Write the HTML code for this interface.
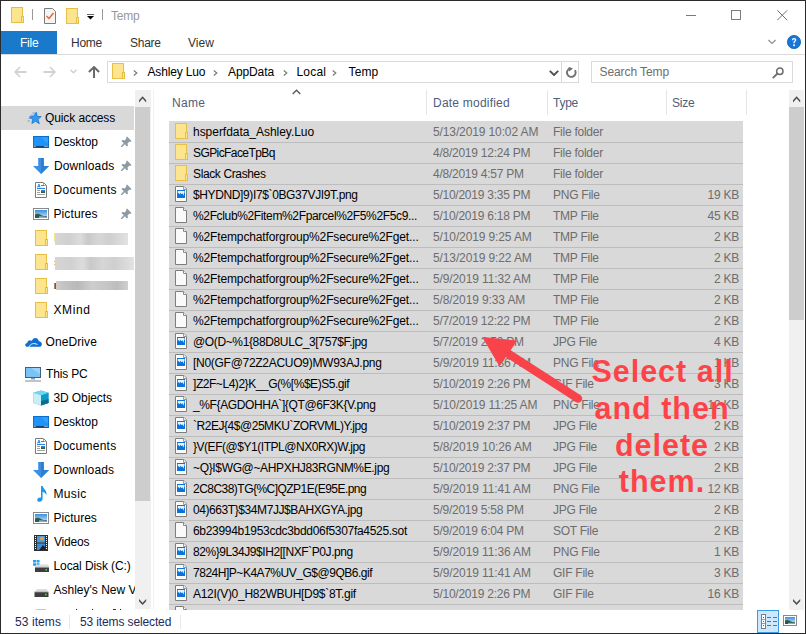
<!DOCTYPE html>
<html><head><meta charset="utf-8">
<style>
*{margin:0;padding:0;box-sizing:border-box}
html,body{width:806px;height:634px;overflow:hidden;background:#fff}
body{position:relative;font-family:"Liberation Sans",sans-serif;font-size:12px;color:#000;letter-spacing:-0.25px}
.abs{position:absolute}
.t{position:absolute;white-space:nowrap;line-height:24px;height:24px}
#frame{position:absolute;left:0;top:0;width:806px;height:634px;border:1px solid #2b2b2b;z-index:50;pointer-events:none}
.row{position:absolute;left:169px;width:574px;height:21px;background:#d9d9d9;border-bottom:1px solid #bdbdbd}
.ric{position:absolute;left:6px;top:1px;width:13px;height:16px;line-height:0}
.rn,.rd,.rt,.rs{position:absolute;top:-2px;line-height:24px;white-space:nowrap}
.rn{left:24px;color:#000}
.rd{left:264px;color:#6d6d6d}
.rt{left:384px;color:#6d6d6d}
.rs{right:4px;color:#6d6d6d}
.ni{position:absolute;line-height:0}
.nt{position:absolute;line-height:24px;white-space:nowrap;color:#000}
.blur{position:absolute;background:linear-gradient(90deg,#d6d6d6,#d0d0d0 20%,#dcdcdc 35%,#c9c9c9 45%,#d6d6d6 60%,#cfcfcf 75%,#dadada 90%,#e2e2e2)}
.blur3{background:linear-gradient(90deg,#cfcfcf,#c4c4c4 10%,#b9b9b9 30%,#cdcdcd 50%,#c6c6c6 70%,#bdbdbd 85%,#d0d0d0)}
</style></head><body>
<div id="frame"></div>

<!-- title bar -->
<div class="abs" style="left:11px;top:7px;line-height:0"><svg width="13" height="16" viewBox="0 0 13 16"><rect x="0.5" y="0.5" width="11" height="15" fill="#fde590" stroke="#e8bf45"/><rect x="10.5" y="9.5" width="2" height="6" fill="#fde590" stroke="#e8bf45"/></svg></div>
<div class="abs" style="left:32px;top:9px;width:1px;height:11px;background:#9a9a9a"></div>
<div class="abs" style="left:44px;top:8px;line-height:0"><svg width="12" height="16" viewBox="0 0 12 16"><path d="M0.5 0.5H8.5L11.5 3.5V15.5H0.5Z" fill="#f4f4f4" stroke="#7b7b7b"/><path d="M2.5 8L5 10.5L9.5 5" fill="none" stroke="#e8632a" stroke-width="1.4"/></svg></div>
<div class="abs" style="left:66px;top:8px;line-height:0"><svg width="13" height="16" viewBox="0 0 13 16"><rect x="0.5" y="0.5" width="11" height="15" fill="#fde590" stroke="#e8bf45"/><rect x="10.5" y="9.5" width="2" height="6" fill="#fde590" stroke="#e8bf45"/></svg></div>
<div class="abs" style="left:87px;top:14px;line-height:0"><svg width="7" height="6" viewBox="0 0 7 6"><path d="M0 0H7" stroke="#000" stroke-width="1.2"/><path d="M0 2H7L3.5 5.5Z" fill="#000"/></svg></div>
<div class="abs" style="left:102px;top:9px;width:1px;height:11px;background:#9a9a9a"></div>
<div class="t" style="left:111px;top:4px;color:#999">Temp</div>

<!-- window controls -->
<div class="abs" style="left:686px;top:15px;width:10px;height:1px;background:#7a7a7a"></div>
<div class="abs" style="left:731px;top:10px;width:10px;height:10px;border:1px solid #7d7d7d"></div>
<div class="abs" style="left:777px;top:10px;line-height:0"><svg width="11" height="11" viewBox="0 0 11 11"><path d="M0.3 0.3L10.2 10.2M10.2 0.3L0.3 10.2" stroke="#6e6e6e" stroke-width="1"/></svg></div>

<!-- ribbon tabs -->
<div class="abs" style="left:1px;top:31px;width:56px;height:23px;background:#1979ca"></div>
<div class="t" style="left:20px;top:31px;color:#fff">File</div>
<div class="t" style="left:71px;top:31px;color:#333">Home</div>
<div class="t" style="left:130px;top:31px;color:#333">Share</div>
<div class="t" style="left:188px;top:31px;color:#333;letter-spacing:0px">View</div>
<div class="abs" style="left:768px;top:39px;line-height:0"><svg width="8" height="6" viewBox="0 0 8 6"><path d="M0.4 1L4 4.4L7.6 1" fill="none" stroke="#8f8f8f" stroke-width="1.3"/></svg></div>
<div class="abs" style="left:787px;top:35px;line-height:0"><svg width="14" height="14" viewBox="0 0 14 14"><circle cx="7" cy="7" r="6.6" fill="#1677d8" stroke="#0b5fb8" stroke-width="0.8"/><path d="M4.9 5.2C4.9 3.8 5.8 3.1 7.1 3.1C8.4 3.1 9.3 3.9 9.3 5C9.3 6.4 7.9 6.6 7.7 7.6V8.3H6.4V7.4C6.6 6.1 8 5.9 8 5.1C8 4.6 7.6 4.3 7.1 4.3C6.5 4.3 6.2 4.7 6.2 5.2Z" fill="#fff"/><rect x="6.2" y="9.4" width="1.7" height="1.7" fill="#fff"/></svg></div>
<div class="abs" style="left:1px;top:54px;width:804px;height:1px;background:#dadbdc"></div>

<!-- nav buttons -->
<div class="abs" style="left:14px;top:66px;line-height:0"><svg width="13" height="12" viewBox="0 0 13 12"><path d="M6 1L1.2 6L6 11M1.2 6H12.5" fill="none" stroke="#d2d2d2" stroke-width="1.8"/></svg></div>
<div class="abs" style="left:43px;top:66px;line-height:0"><svg width="13" height="12" viewBox="0 0 13 12"><path d="M7 1L11.8 6L7 11M11.8 6H0.5" fill="none" stroke="#d2d2d2" stroke-width="1.8"/></svg></div>
<div class="abs" style="left:70px;top:69px;line-height:0"><svg width="7" height="5" viewBox="0 0 7 5"><path d="M0.5 0.8L3.5 3.8L6.5 0.8" fill="none" stroke="#d0d0d0" stroke-width="1.4"/></svg></div>
<div class="abs" style="left:88px;top:66px;line-height:0"><svg width="12" height="12" viewBox="0 0 12 12"><path d="M0.9 6L6 1L11.1 6M6 1.2V12" fill="none" stroke="#6a6a6a" stroke-width="2"/></svg></div>

<!-- address bar -->
<div class="abs" style="left:107px;top:61px;width:472px;height:22px;border:1px solid #d9d9d9"></div>
<div class="abs" style="left:561px;top:62px;width:1px;height:20px;background:#d9d9d9"></div>
<div class="abs" style="left:112px;top:63px;line-height:0"><svg width="13" height="16" viewBox="0 0 13 16"><rect x="0.5" y="0.5" width="11" height="15" fill="#fde590" stroke="#e8bf45"/><rect x="10.5" y="9.5" width="2" height="6" fill="#fde590" stroke="#e8bf45"/></svg></div>
<div class="abs" style="left:133px;top:70px;line-height:0"><svg width="5" height="6" viewBox="0 0 5 6"><path d="M0.8 0.5L3.8 3L0.8 5.5" fill="none" stroke="#7a7a7a" stroke-width="1.2"/></svg></div>
<div class="t" style="left:147.5px;top:60px;color:#000;letter-spacing:-0.16px">Ashley Luo</div>
<div class="abs" style="left:213px;top:70px;line-height:0"><svg width="5" height="6" viewBox="0 0 5 6"><path d="M0.8 0.5L3.8 3L0.8 5.5" fill="none" stroke="#7a7a7a" stroke-width="1.2"/></svg></div>
<div class="t" style="left:228px;top:60px;color:#000;letter-spacing:-0.1px">AppData</div>
<div class="abs" style="left:283px;top:70px;line-height:0"><svg width="5" height="6" viewBox="0 0 5 6"><path d="M0.8 0.5L3.8 3L0.8 5.5" fill="none" stroke="#7a7a7a" stroke-width="1.2"/></svg></div>
<div class="t" style="left:296.5px;top:60px;color:#000;letter-spacing:0.2px">Local</div>
<div class="abs" stle="" style="left:332px;top:70px;line-height:0"><svg width="5" height="6" viewBox="0 0 5 6"><path d="M0.8 0.5L3.8 3L0.8 5.5" fill="none" stroke="#7a7a7a" stroke-width="1.2"/></svg></div>
<div class="t" style="left:348.5px;top:60px;color:#000;letter-spacing:0.15px">Temp</div>
<div class="abs" style="left:549px;top:70px;line-height:0"><svg width="10" height="6" viewBox="0 0 10 6"><path d="M0.8 0.8L5 5L9.2 0.8" fill="none" stroke="#505050" stroke-width="1.9"/></svg></div>
<div class="abs" style="left:566px;top:67px;line-height:0"><svg width="11" height="11" viewBox="0 0 11 11"><path d="M8.9 3.2A4.3 4.3 0 1 1 4.2 1.4" fill="none" stroke="#707070" stroke-width="1.9"/><path d="M2.6 -0.2L7 1.4L3.2 4.4Z" fill="#707070"/></svg></div>

<!-- search -->
<div class="abs" style="left:591px;top:61px;width:202px;height:22px;border:1px solid #d9d9d9"></div>
<div class="t" style="left:599.5px;top:60px;color:#6d6d6d;letter-spacing:-0.09px">Search Temp</div>
<div class="abs" style="left:772px;top:67px;line-height:0"><svg width="12" height="12" viewBox="0 0 12 12"><circle cx="7.8" cy="4.2" r="3.2" fill="none" stroke="#6d6d6d" stroke-width="1.5"/><path d="M5.5 6.5L0.8 11.2" stroke="#6d6d6d" stroke-width="1.8"/></svg></div>

<!-- nav pane -->
<div class="abs" style="left:1px;top:106px;width:133px;height:24px;background:#d9d9d9"></div>
<div class="abs" style="left:1px;top:90px;width:134px;height:520px;overflow:hidden" id="navclip">
<div class="abs" style="left:-1px;top:-90px;width:806px;height:634px">
<div class="ni" style="left:27px;top:112px"><svg width="15" height="13" viewBox="0 0 15 13"><path d="M9.3 0.3L10.2 4.4L14.2 4.6L11 7.3L12.3 11.6L8.4 9.3L4.9 11.6L5.6 7.4L2.4 5L6.6 4.3Z" fill="#2f9af3" stroke="#1d6fc9" stroke-width="0.8" stroke-linejoin="round"/><path d="M5.5 1H8M3.5 3.2H6.5M1.5 6.5H3.5M0.5 9H3" stroke="#5aa6ec" stroke-width="0.9"/></svg></div>
<div class="nt" style="left:45px;top:106px;letter-spacing:-0.1px">Quick access</div>
<div class="ni" style="left:33px;top:136px"><svg width="16" height="12" viewBox="0 0 16 12"><rect x="0.5" y="0.5" width="15" height="11" fill="#1e94fa" stroke="#0d6fcc"/><path d="M9 1.5L14.5 1.5V7Z" fill="#4ab0ff" opacity="0.6"/><rect x="1" y="10" width="14" height="1.5" fill="#0b3f75"/><rect x="1.5" y="10" width="1" height="1" fill="#fff"/><rect x="11.5" y="10" width="1" height="1" fill="#fff"/><rect x="13.5" y="10" width="1" height="1" fill="#fff"/></svg></div>
<div class="nt" style="left:54px;top:130px;letter-spacing:0px">Desktop</div>
<div class="ni" style="left:121px;top:136px"><svg width="11" height="11" viewBox="0 0 11 11"><path d="M6 0.5L10.5 5L9.5 6L8.5 5.5L6.5 7.5L7 9.5L6 10.5L0.5 5L1.5 4L3.5 4.5L5.5 2.5L5 1.5Z" fill="#8b9aa4"/><path d="M3.5 7.5L0 11" stroke="#8b9aa4" stroke-width="1.5"/></svg></div>
<div class="ni" style="left:33px;top:158px"><svg width="16" height="16" viewBox="0 0 16 16"><path d="M5.2 0H10.8V8H16L8 16L0 8H5.2Z" fill="#3a8fe3"/><path d="M8 0H10.8V8H16L8 16Z" fill="#2b7fd6"/></svg></div>
<div class="nt" style="left:54px;top:154px;letter-spacing:0.1px">Downloads</div>
<div class="ni" style="left:121px;top:160px"><svg width="11" height="11" viewBox="0 0 11 11"><path d="M6 0.5L10.5 5L9.5 6L8.5 5.5L6.5 7.5L7 9.5L6 10.5L0.5 5L1.5 4L3.5 4.5L5.5 2.5L5 1.5Z" fill="#8b9aa4"/><path d="M3.5 7.5L0 11" stroke="#8b9aa4" stroke-width="1.5"/></svg></div>
<div class="ni" style="left:35px;top:182px"><svg width="12" height="16" viewBox="0 0 12 16"><path d="M0.5 0.5H8.5L11.5 3.5V15.5H0.5Z" fill="#fff" stroke="#7b7b7b"/><path d="M8.5 0.5V3.5H11.5" fill="none" stroke="#aaa"/><path d="M2.5 5.5L4 2L5 5.5M3 4.5H5" fill="none" stroke="#2b86e0" stroke-width="0.9"/><path d="M6 3.5H9M2 6.5H10" stroke="#2b86e0" stroke-width="1"/><path d="M2 8.5H5M2 10.5H5M2 12.5H10" stroke="#8a8a8a" stroke-width="0.8"/><rect x="6" y="8" width="4" height="3" fill="#3a7fbf"/><rect x="6" y="9.5" width="4" height="1.5" fill="#2e5e3a"/></svg></div>
<div class="nt" style="left:53.5px;top:178px;letter-spacing:0.3px">Documents</div>
<div class="ni" style="left:121px;top:184px"><svg width="11" height="11" viewBox="0 0 11 11"><path d="M6 0.5L10.5 5L9.5 6L8.5 5.5L6.5 7.5L7 9.5L6 10.5L0.5 5L1.5 4L3.5 4.5L5.5 2.5L5 1.5Z" fill="#8b9aa4"/><path d="M3.5 7.5L0 11" stroke="#8b9aa4" stroke-width="1.5"/></svg></div>
<div class="ni" style="left:33px;top:208px"><svg width="16" height="12" viewBox="0 0 16 12"><rect x="0.5" y="0.5" width="15" height="11" fill="#fff" stroke="#8a8a8a"/><defs><linearGradient id="sky" x1="0" y1="0" x2="0" y2="1"><stop offset="0" stop-color="#3b8fe0"/><stop offset="1" stop-color="#cfe6f5"/></linearGradient></defs><rect x="2" y="2" width="12" height="8" fill="url(#sky)"/><path d="M2 6.5C4 5 6 5.5 9 7.5C11 8.5 12.5 8 14 8.5V10H2Z" fill="#2d5d4a"/><path d="M6 8.5C8 8 11 9 14 9.2V10H6Z" fill="#7fb0c8"/></svg></div>
<div class="nt" style="left:53.5px;top:202px;letter-spacing:0.1px">Pictures</div>
<div class="ni" style="left:121px;top:208px"><svg width="11" height="11" viewBox="0 0 11 11"><path d="M6 0.5L10.5 5L9.5 6L8.5 5.5L6.5 7.5L7 9.5L6 10.5L0.5 5L1.5 4L3.5 4.5L5.5 2.5L5 1.5Z" fill="#8b9aa4"/><path d="M3.5 7.5L0 11" stroke="#8b9aa4" stroke-width="1.5"/></svg></div>
<div class="ni" style="left:35px;top:230px"><svg width="13" height="16" viewBox="0 0 13 16"><rect x="0.5" y="0.5" width="11" height="15" fill="#fde590" stroke="#e8bf45"/><rect x="10.5" y="9.5" width="2" height="6" fill="#fde590" stroke="#e8bf45"/></svg></div>
<div class="blur blur1" style="left:55px;top:233px;width:73px;height:12px"></div>
<div class="ni" style="left:35px;top:254px"><svg width="13" height="16" viewBox="0 0 13 16"><rect x="0.5" y="0.5" width="11" height="15" fill="#fde590" stroke="#e8bf45"/><rect x="10.5" y="9.5" width="2" height="6" fill="#fde590" stroke="#e8bf45"/></svg></div>
<div class="blur blur2" style="left:55px;top:257px;width:79px;height:13px"></div>
<div class="ni" style="left:35px;top:278px"><svg width="13" height="16" viewBox="0 0 13 16"><rect x="0.5" y="0.5" width="11" height="15" fill="#fde590" stroke="#e8bf45"/><rect x="10.5" y="9.5" width="2" height="6" fill="#fde590" stroke="#e8bf45"/></svg></div>
<div class="blur blur3" style="left:56px;top:281px;width:72px;height:9px"></div>
<div class="ni" style="left:35px;top:302px"><svg width="13" height="16" viewBox="0 0 13 16"><rect x="0.5" y="0.5" width="11" height="15" fill="#fde590" stroke="#e8bf45"/><rect x="10.5" y="9.5" width="2" height="6" fill="#fde590" stroke="#e8bf45"/></svg></div>
<div class="nt" style="left:53.5px;top:298px;letter-spacing:0.6px">XMind</div>
<div class="ni" style="left:25px;top:337px"><svg width="17" height="10" viewBox="0 0 17 10"><path d="M1.5 9.8C-0.3 9.5 -0.3 6.2 2.2 6C2.5 3.2 5.5 2.8 6.8 4C8 0.2 13 0 13.8 4.3C16.5 4.3 17.5 7 16.5 8.5L15.5 9.8Z" fill="#0f6fd2"/><path d="M4.2 9.8C5.5 6.5 9 5.8 12.5 7.5" stroke="#fff" stroke-width="1" fill="none"/></svg></div>
<div class="nt" style="left:45.5px;top:330px;letter-spacing:0.1px">OneDrive</div>
<div class="ni" style="left:25px;top:367px"><svg width="16" height="15" viewBox="0 0 16 15"><rect x="0.5" y="0.5" width="15" height="10" fill="#79c3f6" stroke="#44607c"/><path d="M6 1L15 1V7Z" fill="#a9dafc" opacity="0.7"/><path d="M6 11H10V12.5H6Z" fill="#8a9aa8"/><path d="M0 14H16" stroke="#9aa6ae" stroke-width="1.3"/></svg></div>
<div class="nt" style="left:46px;top:362px;letter-spacing:-0.15px">This PC</div>
<div class="ni" style="left:33px;top:390px"><svg width="16" height="16" viewBox="0 0 16 16"><path d="M8 0.5L15.5 2.8V13L8 15.5L0.5 13V2.8Z" fill="#23b2d8"/><path d="M8 5.2L15.5 2.8V13L8 15.5Z" fill="#0c9bc4"/><path d="M0.5 2.8L8 0.5L15.5 2.8L8 5.2Z" fill="#6fd6f0"/><path d="M0.5 2.8L8 5.2V15.5L0.5 13Z" fill="#c8eef8"/><path d="M8 11L15.5 9V13L8 15.5Z" fill="#0a6d8f"/></svg></div>
<div class="nt" style="left:53.5px;top:386px;letter-spacing:-0.1px">3D Objects</div>
<div class="ni" style="left:33px;top:416px"><svg width="16" height="12" viewBox="0 0 16 12"><rect x="0.5" y="0.5" width="15" height="11" fill="#1e94fa" stroke="#0d6fcc"/><path d="M9 1.5L14.5 1.5V7Z" fill="#4ab0ff" opacity="0.6"/><rect x="1" y="10" width="14" height="1.5" fill="#0b3f75"/><rect x="1.5" y="10" width="1" height="1" fill="#fff"/><rect x="11.5" y="10" width="1" height="1" fill="#fff"/><rect x="13.5" y="10" width="1" height="1" fill="#fff"/></svg></div>
<div class="nt" style="left:53.5px;top:410px;letter-spacing:0.05px">Desktop</div>
<div class="ni" style="left:35px;top:438px"><svg width="12" height="16" viewBox="0 0 12 16"><path d="M0.5 0.5H8.5L11.5 3.5V15.5H0.5Z" fill="#fff" stroke="#7b7b7b"/><path d="M8.5 0.5V3.5H11.5" fill="none" stroke="#aaa"/><path d="M2.5 5.5L4 2L5 5.5M3 4.5H5" fill="none" stroke="#2b86e0" stroke-width="0.9"/><path d="M6 3.5H9M2 6.5H10" stroke="#2b86e0" stroke-width="1"/><path d="M2 8.5H5M2 10.5H5M2 12.5H10" stroke="#8a8a8a" stroke-width="0.8"/><rect x="6" y="8" width="4" height="3" fill="#3a7fbf"/><rect x="6" y="9.5" width="4" height="1.5" fill="#2e5e3a"/></svg></div>
<div class="nt" style="left:53.5px;top:434px;letter-spacing:0.25px">Documents</div>
<div class="ni" style="left:33px;top:462px"><svg width="16" height="16" viewBox="0 0 16 16"><path d="M5.2 0H10.8V8H16L8 16L0 8H5.2Z" fill="#3a8fe3"/><path d="M8 0H10.8V8H16L8 16Z" fill="#2b7fd6"/></svg></div>
<div class="nt" style="left:53.5px;top:458px;letter-spacing:0.15px">Downloads</div>
<div class="ni" style="left:35px;top:486px"><svg width="14" height="16" viewBox="0 0 14 16"><path d="M6 0H7.6C8 2.5 12.5 4.5 11.2 9C10.5 7 9 6 7.6 6V13C7.6 15.2 4.5 16.5 2.8 15.2C1.3 14 2.8 10.8 6 11.5Z" fill="#1e98ec"/></svg></div>
<div class="nt" style="left:53.5px;top:482px;letter-spacing:0.35px">Music</div>
<div class="ni" style="left:33px;top:512px"><svg width="16" height="12" viewBox="0 0 16 12"><rect x="0.5" y="0.5" width="15" height="11" fill="#fff" stroke="#8a8a8a"/><defs><linearGradient id="sky" x1="0" y1="0" x2="0" y2="1"><stop offset="0" stop-color="#3b8fe0"/><stop offset="1" stop-color="#cfe6f5"/></linearGradient></defs><rect x="2" y="2" width="12" height="8" fill="url(#sky)"/><path d="M2 6.5C4 5 6 5.5 9 7.5C11 8.5 12.5 8 14 8.5V10H2Z" fill="#2d5d4a"/><path d="M6 8.5C8 8 11 9 14 9.2V10H6Z" fill="#7fb0c8"/></svg></div>
<div class="nt" style="left:53.5px;top:506px;letter-spacing:0px">Pictures</div>
<div class="ni" style="left:34px;top:535px"><svg width="14" height="16" viewBox="0 0 14 16"><rect x="0" y="0" width="14" height="16" fill="#2e2e2e"/><rect x="3" y="1" width="8" height="6.5" fill="#4a9ae0"/><circle cx="8" cy="3.5" r="2" fill="#e8a030"/><rect x="3" y="8.5" width="8" height="6.5" fill="#3a8ee0"/><path d="M5 15L9 10L11 12V15Z" fill="#222"/><path d="M1.5 1V15M12.5 1V15" stroke="#fff" stroke-width="1" stroke-dasharray="1 1"/></svg></div>
<div class="nt" style="left:54px;top:530px;letter-spacing:-0.2px">Videos</div>
<div class="ni" style="left:33px;top:560px"><svg width="17" height="13" viewBox="0 0 17 13"><path d="M0 0H3V2.6H0ZM3.6 0H6.5V2.6H3.6ZM0 3.2H3V5.8H0ZM3.6 3.2H6.5V5.8H3.6Z" fill="#1aa3f5"/><path d="M3 6.5L4.5 4.5H15L16 6.5Z" fill="#dcdcdc"/><rect x="2" y="6.5" width="14" height="1" fill="#bdbdbd"/><rect x="2" y="7.5" width="14" height="4.5" fill="#3e3e3e"/><rect x="12.5" y="9" width="1.5" height="1.5" fill="#3ee03e"/></svg></div>
<div class="nt" style="left:53.5px;top:554px;letter-spacing:-0.1px">Local Disk (C:)</div>
<div class="ni" style="left:34px;top:589px"><svg width="15" height="9" viewBox="0 0 15 9"><path d="M1.5 2L3 0H12.5L14 2Z" fill="#dcdcdc"/><rect x="0.5" y="2" width="14" height="1.2" fill="#c2c2c2"/><rect x="0.5" y="3.2" width="14" height="4.8" fill="#3e3e3e"/><rect x="11" y="4.8" width="1.6" height="1.6" fill="#3ee03e"/></svg></div>
<div class="nt" style="left:53.5px;top:578px;letter-spacing:0px">Ashley&#x27;s New Volume (D:)</div>
<div class="abs" style="left:54px;top:233px;width:1px;height:9px;background:#f5e88a"></div>
<div class="abs" style="left:54px;top:261px;width:1px;height:1px;background:#f0a050"></div>
<div class="abs" style="left:54px;top:264px;width:1px;height:1px;background:#f0a050"></div>
<div class="abs" style="left:54px;top:283px;width:2px;height:6px;background:linear-gradient(90deg,#e09040,#2050a0)"></div>
<div class="abs" style="left:36px;top:609px;width:10px;height:1px;background:#c8c8c8"></div>
<div class="abs" style="left:76px;top:609px;width:1px;height:1px;background:#222"></div>
<div class="abs" style="left:92px;top:609px;width:1px;height:1px;background:#222"></div>
<div class="abs" style="left:113px;top:609px;width:3px;height:1px;background:#333"></div>
<div class="abs" style="left:120px;top:609px;width:1px;height:1px;background:#222"></div>
</div></div>
<!-- nav scrollbar -->
<div class="abs" style="left:135px;top:90px;width:16px;height:519px;background:#f0f0f0"></div>
<div class="abs" style="left:135px;top:107px;width:15px;height:394px;background:#cdcdcd"></div>
<div class="abs" style="left:139px;top:96px;line-height:0"><svg width="8" height="7" viewBox="0 0 8 7"><path d="M0 4.2L3.6 0.3L7.2 4.2V6.4L3.6 2.6L0 6.4Z" fill="#4e4e4e"/></svg></div>
<div class="abs" style="left:139px;top:599px;line-height:0"><svg width="8" height="7" viewBox="0 0 8 7"><path d="M0 2.2L3.6 6.1L7.2 2.2V0L3.6 3.8L0 0Z" fill="#4e4e4e"/></svg></div>
<div class="abs" style="left:153px;top:90px;width:1px;height:520px;background:#f0f0f0"></div>

<!-- header -->
<div class="t" style="left:172px;top:91px;color:#4c607a;letter-spacing:0.3px">Name</div>
<div class="abs" style="left:292px;top:89px;line-height:0"><svg width="9" height="6" viewBox="0 0 9 6"><path d="M0.7 5L4.5 1.2L8.3 5" fill="none" stroke="#555" stroke-width="1.3"/></svg></div>
<div class="abs" style="left:426px;top:90px;width:1px;height:25px;background:#e5e5e5"></div>
<div class="t" style="left:433px;top:91px;color:#4c607a;letter-spacing:0.22px">Date modified</div>
<div class="abs" style="left:547px;top:90px;width:1px;height:25px;background:#e5e5e5"></div>
<div class="t" style="left:553px;top:91px;color:#4c607a">Type</div>
<div class="abs" style="left:666px;top:90px;width:1px;height:25px;background:#e5e5e5"></div>
<div class="t" style="left:672px;top:91px;color:#4c607a">Size</div>
<div class="abs" style="left:746px;top:90px;width:1px;height:25px;background:#e5e5e5"></div>

<!-- rows -->
<div class="abs" style="left:0;top:0;width:806px;height:610px;overflow:hidden">
<div class="abs" style="left:169px;top:121px;width:574px;height:1px;background:#d9d9d9"></div>
<div class="row" style="top:122px"><div class="ric"><svg width="13" height="16" viewBox="0 0 13 16"><rect x="0.5" y="0.5" width="11" height="15" fill="#fde590" stroke="#e8bf45"/><rect x="10.5" y="9.5" width="2" height="6" fill="#fde590" stroke="#e8bf45"/></svg></div><div class="rn" style="letter-spacing:-0.036px">hsperfdata_Ashley.Luo</div><div class="rd" style="letter-spacing:-0.12px">5/13/2019 10:02 AM</div><div class="rt">File folder</div><div class="rs"></div></div>
<div class="row" style="top:143px"><div class="ric"><svg width="13" height="16" viewBox="0 0 13 16"><rect x="0.5" y="0.5" width="11" height="15" fill="#fde590" stroke="#e8bf45"/><rect x="10.5" y="9.5" width="2" height="6" fill="#fde590" stroke="#e8bf45"/></svg></div><div class="rn" style="letter-spacing:-0.581px">SGPicFaceTpBq</div><div class="rd" style="letter-spacing:-0.25px">4/8/2019 12:24 PM</div><div class="rt">File folder</div><div class="rs"></div></div>
<div class="row" style="top:164px"><div class="ric"><svg width="13" height="16" viewBox="0 0 13 16"><rect x="0.5" y="0.5" width="11" height="15" fill="#fde590" stroke="#e8bf45"/><rect x="10.5" y="9.5" width="2" height="6" fill="#fde590" stroke="#e8bf45"/></svg></div><div class="rn" style="letter-spacing:-0.373px">Slack Crashes</div><div class="rd" style="letter-spacing:-0.25px">4/8/2019 4:57 PM</div><div class="rt">File folder</div><div class="rs"></div></div>
<div class="row" style="top:185px"><div class="ric"><svg width="12" height="16" viewBox="0 0 12 16"><path d="M0.5 0.5H9L11.5 3V15.5H0.5Z" fill="#fff" stroke="#7d7d7d"/><path d="M8.5 0.5V3.5H11.5" fill="#eee" stroke="#9a9a9a"/><path d="M2.5 2.5H7M2.5 13.5H9.5" stroke="#f0eeee" stroke-width="0.6"/><rect x="2" y="4" width="8" height="8" fill="#0b72d9"/><path d="M2.8 5H9.5V6.8L9 7.3L8.6 9.8L7.8 8L7.2 7.2L6.5 8.2L5.5 6.8L4.5 8.5L3.8 7L2.8 7.8Z" fill="#e8f2fc"/></svg></div><div class="rn" style="letter-spacing:-0.376px">$HYDND]9)I7$`0BG37VJI9T.png</div><div class="rd" style="letter-spacing:-0.25px">5/10/2019 3:35 PM</div><div class="rt">PNG File</div><div class="rs">19 KB</div></div>
<div class="row" style="top:206px"><div class="ric"><svg width="12" height="16" viewBox="0 0 12 16"><path d="M0.5 0.5H8.5L11.5 3.5V15.5H0.5Z" fill="#fafafa" stroke="#7d7d7d"/><path d="M8.5 0.5V3.5H11.5" fill="#fff" stroke="#8a8a8a"/></svg></div><div class="rn" style="letter-spacing:-0.356px">%2Fclub%2Fitem%2Fparcel%2F5%2F5c9...</div><div class="rd" style="letter-spacing:-0.25px">5/10/2019 6:18 PM</div><div class="rt">TMP File</div><div class="rs">45 KB</div></div>
<div class="row" style="top:227px"><div class="ric"><svg width="12" height="16" viewBox="0 0 12 16"><path d="M0.5 0.5H8.5L11.5 3.5V15.5H0.5Z" fill="#fafafa" stroke="#7d7d7d"/><path d="M8.5 0.5V3.5H11.5" fill="#fff" stroke="#8a8a8a"/></svg></div><div class="rn" style="letter-spacing:-0.139px">%2Ftempchatforgroup%2Fsecure%2Fget...</div><div class="rd" style="letter-spacing:-0.12px">5/10/2019 9:25 AM</div><div class="rt">TMP File</div><div class="rs">2 KB</div></div>
<div class="row" style="top:248px"><div class="ric"><svg width="12" height="16" viewBox="0 0 12 16"><path d="M0.5 0.5H8.5L11.5 3.5V15.5H0.5Z" fill="#fafafa" stroke="#7d7d7d"/><path d="M8.5 0.5V3.5H11.5" fill="#fff" stroke="#8a8a8a"/></svg></div><div class="rn" style="letter-spacing:-0.139px">%2Ftempchatforgroup%2Fsecure%2Fget...</div><div class="rd" style="letter-spacing:-0.12px">5/13/2019 9:22 AM</div><div class="rt">TMP File</div><div class="rs">2 KB</div></div>
<div class="row" style="top:269px"><div class="ric"><svg width="12" height="16" viewBox="0 0 12 16"><path d="M0.5 0.5H8.5L11.5 3.5V15.5H0.5Z" fill="#fafafa" stroke="#7d7d7d"/><path d="M8.5 0.5V3.5H11.5" fill="#fff" stroke="#8a8a8a"/></svg></div><div class="rn" style="letter-spacing:-0.139px">%2Ftempchatforgroup%2Fsecure%2Fget...</div><div class="rd" style="letter-spacing:-0.12px">5/9/2019 11:32 AM</div><div class="rt">TMP File</div><div class="rs">2 KB</div></div>
<div class="row" style="top:290px"><div class="ric"><svg width="12" height="16" viewBox="0 0 12 16"><path d="M0.5 0.5H8.5L11.5 3.5V15.5H0.5Z" fill="#fafafa" stroke="#7d7d7d"/><path d="M8.5 0.5V3.5H11.5" fill="#fff" stroke="#8a8a8a"/></svg></div><div class="rn" style="letter-spacing:-0.139px">%2Ftempchatforgroup%2Fsecure%2Fget...</div><div class="rd" style="letter-spacing:-0.12px">5/8/2019 9:33 AM</div><div class="rt">TMP File</div><div class="rs">2 KB</div></div>
<div class="row" style="top:311px"><div class="ric"><svg width="12" height="16" viewBox="0 0 12 16"><path d="M0.5 0.5H8.5L11.5 3.5V15.5H0.5Z" fill="#fafafa" stroke="#7d7d7d"/><path d="M8.5 0.5V3.5H11.5" fill="#fff" stroke="#8a8a8a"/></svg></div><div class="rn" style="letter-spacing:-0.139px">%2Ftempchatforgroup%2Fsecure%2Fget...</div><div class="rd" style="letter-spacing:-0.25px">5/7/2019 12:22 PM</div><div class="rt">TMP File</div><div class="rs">2 KB</div></div>
<div class="row" style="top:332px"><div class="ric"><svg width="12" height="16" viewBox="0 0 12 16"><path d="M0.5 0.5H9L11.5 3V15.5H0.5Z" fill="#fff" stroke="#7d7d7d"/><path d="M8.5 0.5V3.5H11.5" fill="#eee" stroke="#9a9a9a"/><path d="M2.5 2.5H7M2.5 13.5H9.5" stroke="#f0eeee" stroke-width="0.6"/><rect x="2" y="4" width="8" height="8" fill="#0b72d9"/><path d="M2.8 5H9.5V6.8L9 7.3L8.6 9.8L7.8 8L7.2 7.2L6.5 8.2L5.5 6.8L4.5 8.5L3.8 7L2.8 7.8Z" fill="#e8f2fc"/></svg></div><div class="rn" style="letter-spacing:-0.365px">@O(D~%1{88D8ULC_3[757$F.jpg</div><div class="rd" style="letter-spacing:-0.25px">5/7/2019 2:50 PM</div><div class="rt">JPG File</div><div class="rs">4 KB</div></div>
<div class="row" style="top:353px"><div class="ric"><svg width="12" height="16" viewBox="0 0 12 16"><path d="M0.5 0.5H9L11.5 3V15.5H0.5Z" fill="#fff" stroke="#7d7d7d"/><path d="M8.5 0.5V3.5H11.5" fill="#eee" stroke="#9a9a9a"/><path d="M2.5 2.5H7M2.5 13.5H9.5" stroke="#f0eeee" stroke-width="0.6"/><rect x="2" y="4" width="8" height="8" fill="#0b72d9"/><path d="M2.8 5H9.5V6.8L9 7.3L8.6 9.8L7.8 8L7.2 7.2L6.5 8.2L5.5 6.8L4.5 8.5L3.8 7L2.8 7.8Z" fill="#e8f2fc"/></svg></div><div class="rn" style="letter-spacing:-0.283px">[N0(GF@72Z2ACUO9)MW93AJ.png</div><div class="rd" style="letter-spacing:-0.12px">5/9/2019 11:36 AM</div><div class="rt">PNG File</div><div class="rs">1 KB</div></div>
<div class="row" style="top:374px"><div class="ric"><svg width="12" height="16" viewBox="0 0 12 16"><path d="M0.5 0.5H9L11.5 3V15.5H0.5Z" fill="#fff" stroke="#7d7d7d"/><path d="M8.5 0.5V3.5H11.5" fill="#eee" stroke="#9a9a9a"/><path d="M2.5 2.5H7M2.5 13.5H9.5" stroke="#f0eeee" stroke-width="0.6"/><rect x="2" y="4" width="8" height="8" fill="#0b72d9"/><path d="M2.8 5H9.5V6.8L9 7.3L8.6 9.8L7.8 8L7.2 7.2L6.5 8.2L5.5 6.8L4.5 8.5L3.8 7L2.8 7.8Z" fill="#e8f2fc"/></svg></div><div class="rn" style="letter-spacing:-0.454px">]Z2F~L4)2}K__G(%[%$E)S5.gif</div><div class="rd" style="letter-spacing:-0.25px">5/10/2019 2:26 PM</div><div class="rt">GIF File</div><div class="rs">3 KB</div></div>
<div class="row" style="top:395px"><div class="ric"><svg width="12" height="16" viewBox="0 0 12 16"><path d="M0.5 0.5H9L11.5 3V15.5H0.5Z" fill="#fff" stroke="#7d7d7d"/><path d="M8.5 0.5V3.5H11.5" fill="#eee" stroke="#9a9a9a"/><path d="M2.5 2.5H7M2.5 13.5H9.5" stroke="#f0eeee" stroke-width="0.6"/><rect x="2" y="4" width="8" height="8" fill="#0b72d9"/><path d="M2.8 5H9.5V6.8L9 7.3L8.6 9.8L7.8 8L7.2 7.2L6.5 8.2L5.5 6.8L4.5 8.5L3.8 7L2.8 7.8Z" fill="#e8f2fc"/></svg></div><div class="rn" style="letter-spacing:-0.372px">_%F{AGDOHHA`]{QT@6F3K{V.png</div><div class="rd" style="letter-spacing:-0.12px">5/10/2019 11:25 AM</div><div class="rt">PNG File</div><div class="rs">12 KB</div></div>
<div class="row" style="top:416px"><div class="ric"><svg width="12" height="16" viewBox="0 0 12 16"><path d="M0.5 0.5H9L11.5 3V15.5H0.5Z" fill="#fff" stroke="#7d7d7d"/><path d="M8.5 0.5V3.5H11.5" fill="#eee" stroke="#9a9a9a"/><path d="M2.5 2.5H7M2.5 13.5H9.5" stroke="#f0eeee" stroke-width="0.6"/><rect x="2" y="4" width="8" height="8" fill="#0b72d9"/><path d="M2.8 5H9.5V6.8L9 7.3L8.6 9.8L7.8 8L7.2 7.2L6.5 8.2L5.5 6.8L4.5 8.5L3.8 7L2.8 7.8Z" fill="#e8f2fc"/></svg></div><div class="rn" style="letter-spacing:-0.465px">`R2EJ{4$@25MKU`ZORVML)Y.jpg</div><div class="rd" style="letter-spacing:-0.25px">5/10/2019 2:37 PM</div><div class="rt">JPG File</div><div class="rs">2 KB</div></div>
<div class="row" style="top:437px"><div class="ric"><svg width="12" height="16" viewBox="0 0 12 16"><path d="M0.5 0.5H9L11.5 3V15.5H0.5Z" fill="#fff" stroke="#7d7d7d"/><path d="M8.5 0.5V3.5H11.5" fill="#eee" stroke="#9a9a9a"/><path d="M2.5 2.5H7M2.5 13.5H9.5" stroke="#f0eeee" stroke-width="0.6"/><rect x="2" y="4" width="8" height="8" fill="#0b72d9"/><path d="M2.8 5H9.5V6.8L9 7.3L8.6 9.8L7.8 8L7.2 7.2L6.5 8.2L5.5 6.8L4.5 8.5L3.8 7L2.8 7.8Z" fill="#e8f2fc"/></svg></div><div class="rn" style="letter-spacing:-0.461px">}V(EF(@$Y1(ITPL@NX0RX)W.jpg</div><div class="rd" style="letter-spacing:-0.12px">5/8/2019 10:26 AM</div><div class="rt">JPG File</div><div class="rs">2 KB</div></div>
<div class="row" style="top:458px"><div class="ric"><svg width="12" height="16" viewBox="0 0 12 16"><path d="M0.5 0.5H9L11.5 3V15.5H0.5Z" fill="#fff" stroke="#7d7d7d"/><path d="M8.5 0.5V3.5H11.5" fill="#eee" stroke="#9a9a9a"/><path d="M2.5 2.5H7M2.5 13.5H9.5" stroke="#f0eeee" stroke-width="0.6"/><rect x="2" y="4" width="8" height="8" fill="#0b72d9"/><path d="M2.8 5H9.5V6.8L9 7.3L8.6 9.8L7.8 8L7.2 7.2L6.5 8.2L5.5 6.8L4.5 8.5L3.8 7L2.8 7.8Z" fill="#e8f2fc"/></svg></div><div class="rn" style="letter-spacing:-0.343px">~Q}I$WG@~AHPXHJ83RGNM%E.jpg</div><div class="rd" style="letter-spacing:-0.25px">5/10/2019 2:37 PM</div><div class="rt">JPG File</div><div class="rs">2 KB</div></div>
<div class="row" style="top:479px"><div class="ric"><svg width="12" height="16" viewBox="0 0 12 16"><path d="M0.5 0.5H9L11.5 3V15.5H0.5Z" fill="#fff" stroke="#7d7d7d"/><path d="M8.5 0.5V3.5H11.5" fill="#eee" stroke="#9a9a9a"/><path d="M2.5 2.5H7M2.5 13.5H9.5" stroke="#f0eeee" stroke-width="0.6"/><rect x="2" y="4" width="8" height="8" fill="#0b72d9"/><path d="M2.8 5H9.5V6.8L9 7.3L8.6 9.8L7.8 8L7.2 7.2L6.5 8.2L5.5 6.8L4.5 8.5L3.8 7L2.8 7.8Z" fill="#e8f2fc"/></svg></div><div class="rn" style="letter-spacing:-0.528px">2C8C38)TG{%C]QZP1E(E95E.png</div><div class="rd" style="letter-spacing:-0.12px">5/9/2019 11:41 AM</div><div class="rt">PNG File</div><div class="rs">12 KB</div></div>
<div class="row" style="top:500px"><div class="ric"><svg width="12" height="16" viewBox="0 0 12 16"><path d="M0.5 0.5H9L11.5 3V15.5H0.5Z" fill="#fff" stroke="#7d7d7d"/><path d="M8.5 0.5V3.5H11.5" fill="#eee" stroke="#9a9a9a"/><path d="M2.5 2.5H7M2.5 13.5H9.5" stroke="#f0eeee" stroke-width="0.6"/><rect x="2" y="4" width="8" height="8" fill="#0b72d9"/><path d="M2.8 5H9.5V6.8L9 7.3L8.6 9.8L7.8 8L7.2 7.2L6.5 8.2L5.5 6.8L4.5 8.5L3.8 7L2.8 7.8Z" fill="#e8f2fc"/></svg></div><div class="rn" style="letter-spacing:-0.42px">04)663T}$34M7JJ$BAHXGYA.jpg</div><div class="rd" style="letter-spacing:-0.25px">5/9/2019 5:58 PM</div><div class="rt">JPG File</div><div class="rs">2 KB</div></div>
<div class="row" style="top:521px"><div class="ric"><svg width="12" height="16" viewBox="0 0 12 16"><path d="M0.5 0.5H8.5L11.5 3.5V15.5H0.5Z" fill="#fafafa" stroke="#7d7d7d"/><path d="M8.5 0.5V3.5H11.5" fill="#fff" stroke="#8a8a8a"/></svg></div><div class="rn" style="letter-spacing:-0.303px">6b23994b1953cdc3bdd06f5307fa4525.sot</div><div class="rd" style="letter-spacing:-0.25px">5/9/2019 6:04 PM</div><div class="rt">SOT File</div><div class="rs">2 KB</div></div>
<div class="row" style="top:542px"><div class="ric"><svg width="12" height="16" viewBox="0 0 12 16"><path d="M0.5 0.5H9L11.5 3V15.5H0.5Z" fill="#fff" stroke="#7d7d7d"/><path d="M8.5 0.5V3.5H11.5" fill="#eee" stroke="#9a9a9a"/><path d="M2.5 2.5H7M2.5 13.5H9.5" stroke="#f0eeee" stroke-width="0.6"/><rect x="2" y="4" width="8" height="8" fill="#0b72d9"/><path d="M2.8 5H9.5V6.8L9 7.3L8.6 9.8L7.8 8L7.2 7.2L6.5 8.2L5.5 6.8L4.5 8.5L3.8 7L2.8 7.8Z" fill="#e8f2fc"/></svg></div><div class="rn" style="letter-spacing:-0.431px">82%}9L34J9$IH2[[NXF`P0J.png</div><div class="rd" style="letter-spacing:-0.12px">5/9/2019 11:36 AM</div><div class="rt">PNG File</div><div class="rs">1 KB</div></div>
<div class="row" style="top:563px"><div class="ric"><svg width="12" height="16" viewBox="0 0 12 16"><path d="M0.5 0.5H9L11.5 3V15.5H0.5Z" fill="#fff" stroke="#7d7d7d"/><path d="M8.5 0.5V3.5H11.5" fill="#eee" stroke="#9a9a9a"/><path d="M2.5 2.5H7M2.5 13.5H9.5" stroke="#f0eeee" stroke-width="0.6"/><rect x="2" y="4" width="8" height="8" fill="#0b72d9"/><path d="M2.8 5H9.5V6.8L9 7.3L8.6 9.8L7.8 8L7.2 7.2L6.5 8.2L5.5 6.8L4.5 8.5L3.8 7L2.8 7.8Z" fill="#e8f2fc"/></svg></div><div class="rn" style="letter-spacing:-0.476px">7824H]P~K4A7%UV_G$@9QB6.gif</div><div class="rd" style="letter-spacing:-0.12px">5/9/2019 11:41 AM</div><div class="rt">GIF File</div><div class="rs">3 KB</div></div>
<div class="row" style="top:584px"><div class="ric"><svg width="12" height="16" viewBox="0 0 12 16"><path d="M0.5 0.5H9L11.5 3V15.5H0.5Z" fill="#fff" stroke="#7d7d7d"/><path d="M8.5 0.5V3.5H11.5" fill="#eee" stroke="#9a9a9a"/><path d="M2.5 2.5H7M2.5 13.5H9.5" stroke="#f0eeee" stroke-width="0.6"/><rect x="2" y="4" width="8" height="8" fill="#0b72d9"/><path d="M2.8 5H9.5V6.8L9 7.3L8.6 9.8L7.8 8L7.2 7.2L6.5 8.2L5.5 6.8L4.5 8.5L3.8 7L2.8 7.8Z" fill="#e8f2fc"/></svg></div><div class="rn" style="letter-spacing:-0.294px">A12I(V)0_H82WBUH[D9$`8T.gif</div><div class="rd" style="letter-spacing:-0.25px">5/10/2019 2:26 PM</div><div class="rt">GIF File</div><div class="rs">16 KB</div></div>
<div class="row" style="top:605px"><div class="ric"><svg width="12" height="16" viewBox="0 0 12 16"><path d="M0.5 0.5H8.5L11.5 3.5V15.5H0.5Z" fill="#fafafa" stroke="#7d7d7d"/><path d="M8.5 0.5V3.5H11.5" fill="#fff" stroke="#8a8a8a"/></svg></div><div class="rn" style="letter-spacing:-0.25px"></div><div class="rd" style="letter-spacing:-0.25px"></div><div class="rt"></div><div class="rs"></div></div>
</div>

<!-- list scrollbar -->
<div class="abs" style="left:789px;top:90px;width:15px;height:520px;background:#f0f0f0"></div>
<div class="abs" style="left:789px;top:107px;width:15px;height:213px;background:#cdcdcd"></div>
<div class="abs" style="left:793px;top:96px;line-height:0"><svg width="8" height="7" viewBox="0 0 8 7"><path d="M0 4.2L3.6 0.3L7.2 4.2V6.4L3.6 2.6L0 6.4Z" fill="#4e4e4e"/></svg></div>
<div class="abs" style="left:793px;top:599px;line-height:0"><svg width="8" height="7" viewBox="0 0 8 7"><path d="M0 2.2L3.6 6.1L7.2 2.2V0L3.6 3.8L0 0Z" fill="#4e4e4e"/></svg></div>

<!-- status bar -->
<div class="t" style="left:15px;top:610px;color:#1e2a5a;letter-spacing:0.08px">53 items</div>
<div class="abs" style="left:69px;top:615px;width:1px;height:14px;background:#e8e8e8"></div>
<div class="t" style="left:80px;top:610px;color:#1e2a5a;letter-spacing:-0.13px">53 items selected</div>
<div class="abs" style="left:180px;top:615px;width:1px;height:14px;background:#e8e8e8"></div>
<div class="abs" style="left:757px;top:610px;width:22px;height:23px;background:#cce8ff;border:1px solid #3c9ae0"></div>
<div class="abs" style="left:761px;top:614px;line-height:0"><svg width="17" height="15" viewBox="0 0 17 15"><rect x="0.5" y="0.5" width="4" height="14" fill="#fff" stroke="#7d7d7d"/><path d="M1 5.5H4M1 9.5H4" stroke="#a0a0a0" stroke-width="1"/><rect x="2" y="3" width="1" height="1" fill="#2d5a7a"/><rect x="2" y="7" width="1" height="1" fill="#2a7ae0"/><rect x="2" y="11" width="1" height="1" fill="#e03030"/><path d="M6 3.5H10M12 3.5H16M6 7.5H10M12 7.5H16M6 11.5H10M12 11.5H16" stroke="#6f6f6f" stroke-width="1.2"/></svg></div>
<div class="abs" style="left:783px;top:615px;line-height:0"><svg width="14" height="11" viewBox="0 0 14 11"><rect x="0.5" y="0.5" width="13" height="10" fill="#fff" stroke="#8a8a8a"/><defs><linearGradient id="sk2" x1="0" y1="0" x2="0" y2="1"><stop offset="0" stop-color="#3f8ee8"/><stop offset="1" stop-color="#d8ecf5"/></linearGradient></defs><rect x="2" y="2" width="10" height="7" fill="url(#sk2)"/><path d="M2 5.5C4 4.5 6 5 8 6.5C10 7.5 11 7 12 7.5V9H2Z" fill="#2b5a48"/><path d="M5 8C7 7.5 10 8 12 8.3V9H5Z" fill="#7ab2c8"/></svg></div>

<!-- annotation -->
<div class="abs" style="left:0;top:0;line-height:0;z-index:10"><svg width="806" height="634" viewBox="0 0 806 634"><path d="M578 398.5L505 351.5" stroke="#f9434a" stroke-width="8.5" stroke-linecap="round"/><path d="M483 337.5L516.5 341L499.5 365.5Z" fill="#f9434a" stroke="#f9434a" stroke-width="1" stroke-linejoin="round"/></svg></div>
<div class="abs" style="left:567px;top:353px;width:190px;text-align:center;color:#fd4347;font-weight:bold;font-size:30.5px;line-height:36.8px;letter-spacing:1px;text-indent:1px;z-index:11;text-shadow:0 0 0.6px rgba(240,248,248,0.8)">Select all<br>and then<br>delete<br>them.</div>
</body></html>
